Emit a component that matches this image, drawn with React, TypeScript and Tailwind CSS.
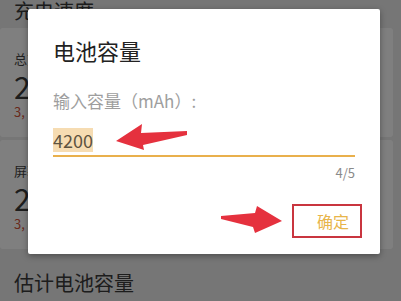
import React from 'react'

const font = { fontFamily: '"Noto Sans CJK SC", "Noto Sans", sans-serif' }

function StatCard({ label, value, sub }: { label: string; value: string; sub: string }) {
  return (
    <div className="mr-[8px] h-[109px] rounded-[3px] bg-white pl-[14px] pt-[22px]">
      <div className="text-[13px] leading-[18px] text-[#444]">{label}</div>
      <div className="mt-[1px] text-[30px] leading-[34px] text-[#3a3a3a]">{value}</div>
      <div className="mt-[1px] text-[13px] leading-[16px] text-[#d2553a]">{sub}</div>
    </div>
  )
}

export default function App() {
  return (
    <div className="relative h-[301px] w-[401px] overflow-hidden bg-[#ececec]" style={font}>
      {/* page under the dialog */}
      <div className="-mt-[1px] h-[29px] pl-[14px] text-[20px] leading-[24px] text-[#3a3a3a]">充电速度</div>
      <div className="flex flex-col gap-[3px]">
        <StatCard label="总充电功率" value="2.14 W" sub="3, 812 mV · 561 mA" />
        <StatCard label="屏幕关闭时" value="2.03 W" sub="3, 806 mV · 533 mA" />
      </div>
      <div className="mt-[22px] pl-[14px] text-[20px] leading-[24px] text-[#3a3a3a]">估计电池容量</div>

      {/* dim layer */}
      <div className="absolute inset-0 bg-black/50" />

      {/* dialog */}
      <div className="absolute left-[28px] top-[9px] flex h-[245px] w-[352px] flex-col rounded-[2px] bg-white px-[25px] pt-[27px] shadow-[0_2px_6px_rgba(0,0,0,0.35)]">
        <div className="h-[28px] text-[22px] leading-[28px] text-[#222]">电池容量</div>
        <div className="mt-[26px] h-[22px] text-[17px] leading-[22px] text-[#9e9e9e]">输入容量（mAh）:</div>
        <div className="mt-[16px] flex h-[24px]">
          <span className="bg-[#f6dcb2] text-[18px] leading-[24px] text-[#5e5340]">4200</span>
        </div>
        <div className="mt-[3px] h-[2px] bg-[#e9b04c]" />
        <div className="mt-[8px] text-right text-[13px] leading-[16px] text-[#8a8a8a]">4/5</div>
        <div className="mt-[23px] flex justify-end">
          <div className="-mr-[7px] flex h-[34px] w-[70px] items-center border-2 border-[#c9353f] pl-[23px] text-[16px] text-[#e8b54a]">
            确定
          </div>
        </div>
      </div>

      {/* annotation arrows */}
      <svg className="absolute inset-0" width="401" height="301" viewBox="0 0 401 301">
        <polygon
          points="116,141 142,124 141,133 187,131 187,135 143,145 144,150"
          fill="#e5313e"
        />
        <polygon
          points="221,216 255,213 257,206 282,221 255,233 253,227 221,219"
          fill="#e5313e"
        />
      </svg>
    </div>
  )
}
